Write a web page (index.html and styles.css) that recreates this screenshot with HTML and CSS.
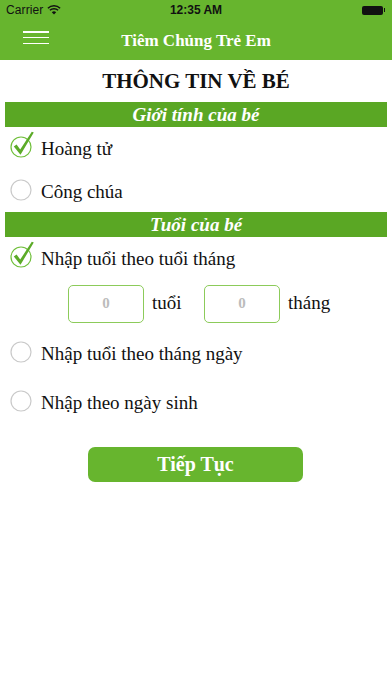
FILE: index.html
```html
<!DOCTYPE html>
<html lang="vi">
<head>
<meta charset="utf-8">
<link rel="stylesheet" href="styles.css">
</head>
<body>
<header class="top">
  <div class="status">
    <div class="carrier">Carrier
      <svg class="wifi" width="14" height="10" viewBox="0 0 14 10"><path d="M7 9.5 L4.8 7.2 A3.2 3.2 0 0 1 9.2 7.2 Z" fill="#111"/><path d="M2.9 5.3 A5.9 5.9 0 0 1 11.1 5.3" stroke="#111" stroke-width="1.5" fill="none"/><path d="M0.9 3.3 A8.7 8.7 0 0 1 13.1 3.3" stroke="#111" stroke-width="1.5" fill="none"/></svg>
    </div>
    <div class="time">12:35 AM</div>
    <div class="battery"><span class="cell"></span><span class="nub"></span></div>
  </div>
  <nav class="nav">
    <div class="menu"><span></span><span></span><span></span></div>
    <div class="nav-title">Tiêm Chủng Trẻ Em</div>
  </nav>
</header>
<main class="content">
  <h1 class="title">THÔNG TIN VỀ BÉ</h1>
  <div class="bar">Giới tính của bé</div>
  <div class="option first">
    <svg class="ico" width="26" height="28" viewBox="0 0 26 28"><circle cx="11" cy="16" r="10" fill="none" stroke="#6fbf3a" stroke-width="1.2"/><path d="M3.8 15.6 L10.5 23.8 L23.8 1.6 L21.8 0.8 L10.2 18.6 L6.6 13.6 Z" fill="#5cab28"/></svg>
    <span>Hoàng tử</span>
  </div>
  <div class="option second">
    <svg class="ico" width="26" height="28" viewBox="0 0 26 28"><circle cx="11" cy="16" r="10" fill="none" stroke="#c9c9c9" stroke-width="1.2"/></svg>
    <span>Công chúa</span>
  </div>
  <div class="bar bar2">Tuổi của bé</div>
  <div class="option first">
    <svg class="ico" width="26" height="28" viewBox="0 0 26 28"><circle cx="11" cy="16" r="10" fill="none" stroke="#6fbf3a" stroke-width="1.2"/><path d="M3.8 15.6 L10.5 23.8 L23.8 1.6 L21.8 0.8 L10.2 18.6 L6.6 13.6 Z" fill="#5cab28"/></svg>
    <span>Nhập tuổi theo tuổi tháng</span>
  </div>
  <div class="age-row">
    <div class="box">0</div><span class="unit">tuổi</span>
    <div class="box">0</div><span class="unit">tháng</span>
  </div>
  <div class="option opt3">
    <svg class="ico" width="26" height="28" viewBox="0 0 26 28"><circle cx="11" cy="16" r="10" fill="none" stroke="#c9c9c9" stroke-width="1.2"/></svg>
    <span>Nhập tuổi theo tháng ngày</span>
  </div>
  <div class="option opt4">
    <svg class="ico" width="26" height="28" viewBox="0 0 26 28"><circle cx="11" cy="16" r="10" fill="none" stroke="#c9c9c9" stroke-width="1.2"/></svg>
    <span>Nhập theo ngày sinh</span>
  </div>
  <div class="btn-wrap"><button class="btn">Tiếp Tục</button></div>
</main>
</body>
</html>
```
FILE: styles.css
```css
* { box-sizing: border-box; }
html, body { margin: 0; padding: 0; background: #fff; }
body { width: 392px; height: 696px; overflow: hidden; font-family: "Liberation Serif", "Times New Roman", serif; color: #111; }

.top { background: #67b52e; height: 60px; }
.status { height: 20px; display: flex; align-items: center; justify-content: space-between; padding: 0 7px 0 6px; font-family: "Liberation Sans", Arial, sans-serif; font-size: 12px; color: #111; position: relative; }
.carrier { display: flex; align-items: center; gap: 4px; letter-spacing: 0.1px; }
.wifi { margin-top: -1px; }
.time { position: absolute; left: 0; right: 0; text-align: center; font-weight: bold; pointer-events: none; }
.battery { display: flex; align-items: center; }
.cell { width: 21px; height: 9px; background: #111; border-radius: 2px; display: block; }
.nub { width: 1.5px; height: 4px; background: #111; display: block; margin-left: 0.5px; }

.nav { height: 40px; position: relative; display: flex; align-items: center; justify-content: center; }
.menu { position: absolute; left: 23px; top: 11px; width: 26px; display: flex; flex-direction: column; gap: 4.3px; }
.menu span { display: block; height: 1.5px; background: #fff; }
.nav-title { color: #fff; font-weight: bold; font-size: 17px; margin-top: 1px; }

.content { display: flex; flex-direction: column; }
.title { margin: 6px 0 0; text-align: center; font-size: 21px; font-weight: bold; height: 30px; line-height: 30px; }
.bar { margin: 6px 5px 0; height: 25px; background: #5aa724; color: #fff; font-style: italic; font-weight: bold; font-size: 19px; text-align: center; line-height: 25px; }
.bar2 { margin-top: 0; }

.option { display: flex; align-items: center; height: 44px; padding-left: 10px; font-size: 19px; }
.option .ico { flex: none; margin-top: -8px; }
.option span { margin-left: 5px; }
.option.second { height: 41px; }
.opt3 { height: 50px; margin-top: 6px; }
.opt4 { height: 48px; }

.age-row { display: flex; align-items: center; padding-left: 68px; height: 38px; margin-top: 4px; }
.box { width: 76px; height: 38px; border: 1.5px solid #8ccb5a; border-radius: 5px; text-align: center; line-height: 35px; color: #bcbcbc; font-size: 15px; font-weight: bold; }
.unit { font-size: 19px; margin-left: 8px; width: 52px; margin-top: -2px; }

.btn-wrap { display: flex; justify-content: center; margin-top: 20px; }
.btn { width: 215px; height: 35px; margin-left: -1px; background: #67b52e; color: #fff; border: none; border-radius: 7px; font-family: "Liberation Serif", "Times New Roman", serif; font-weight: bold; font-size: 20px; padding: 0; }
```
